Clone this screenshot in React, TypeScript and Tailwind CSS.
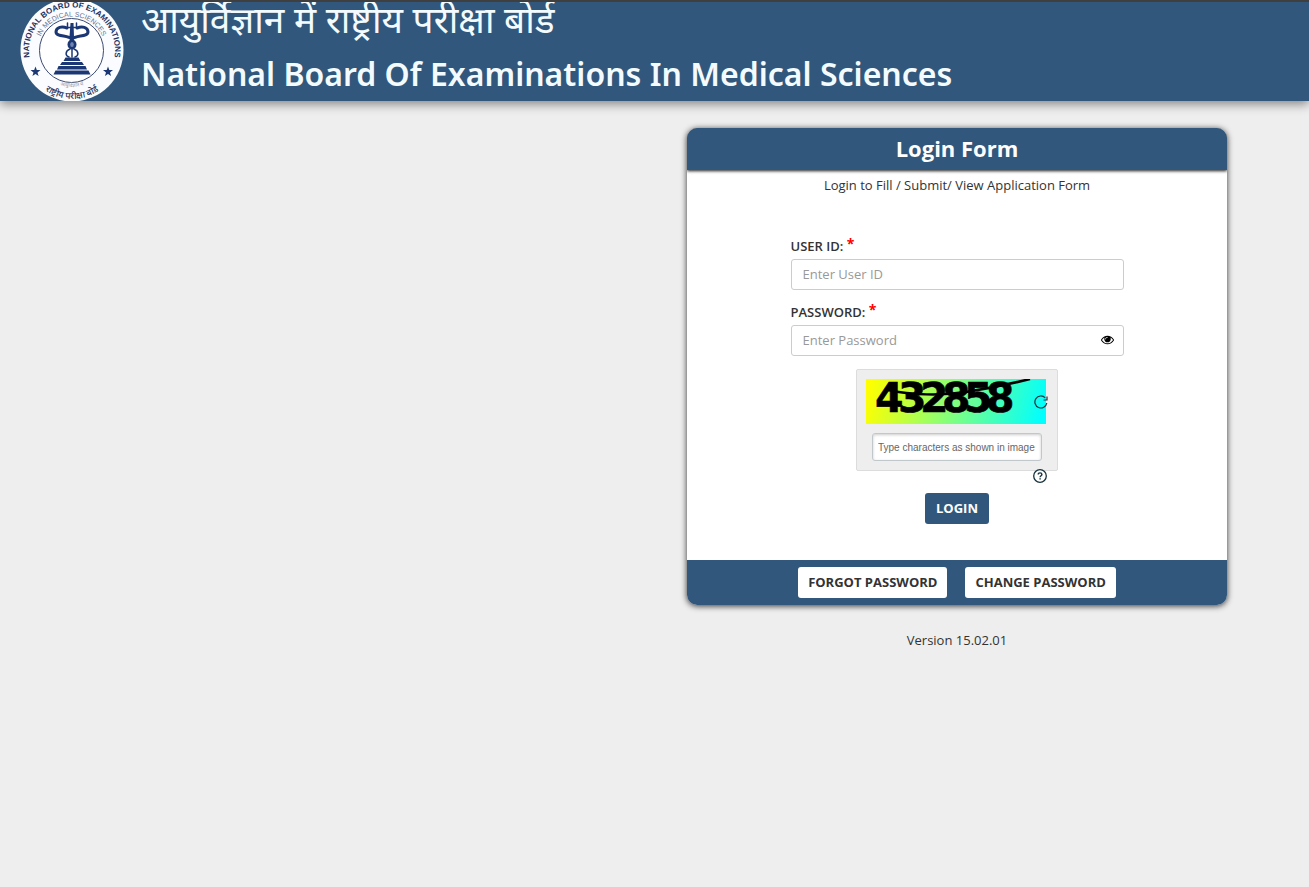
import { useState } from "react";

const captcha = [
  { digit: "4", x: 9 },
  { digit: "3", x: 32 },
  { digit: "2", x: 54 },
  { digit: "8", x: 76 },
  { digit: "5", x: 98 },
  { digit: "8", x: 120 },
];

function Seal() {
  return (
    <svg viewBox="0 0 104 104" className="h-[104px] w-[104px] shrink-0" role="img" aria-label="NBEMS seal">
      <defs>
        <path id="outer" d="M 9.500 59 A 43 43 0 1 1 94.500 59" />
        <path id="inner" d="M 17.500 52.500 A 34 34 0 0 1 85.500 52.500" />
        <path id="lower" d="M 15 83 A 47 47 0 0 0 89 83" />
        <path id="lower2" d="M 30 82 A 38 38 0 0 0 74 82" />
      </defs>
      <circle cx="52" cy="52" r="51.5" fill="#fbfcff" />
      <circle cx="51.5" cy="52.5" r="32" fill="#fff" stroke="#3b4a72" strokeWidth="1" />
      <g fill="#22335f" fontFamily="'Liberation Sans', sans-serif" textAnchor="middle">
        <text fontSize="8" fontWeight="700"><textPath href="#outer" startOffset="50%">NATIONAL BOARD OF EXAMINATIONS</textPath></text>
        <text fontSize="7" fill="#69748f"><textPath href="#inner" startOffset="50%">IN MEDICAL SCIENCES</textPath></text>
        <text fontSize="9" fontFamily="'Noto Sans', sans-serif" fontWeight="500"><textPath href="#lower" startOffset="50%">राष्ट्रीय परीक्षा बोर्ड</textPath></text>
        <text fontSize="5" fontFamily="'Noto Sans', sans-serif" fill="#8a93aa"><textPath href="#lower2" startOffset="50%">आयुर्विज्ञान में</textPath></text>
      </g>
      <g fill="#1b3875">
        <path d="M15.500 68.500l1.300 3.500 3.700.1-3 2.300 1.100 3.600-3.100-2.100-3.100 2.100 1.100-3.600-3-2.300 3.700-.1z" />
        <path d="M88 68.500l1.300 3.500 3.700.1-3 2.300 1.100 3.600-3.100-2.100-3.100 2.100 1.100-3.600-3-2.300 3.700-.1z" />
        <path d="M50.500 25h3l.5 14-1.500 12h-2L49.500 39z" />
        <ellipse cx="52" cy="46.500" rx="4.500" ry="5" />
        <path d="M45.500 59.500h13l2 3.500h-17zM42 64h20l2 3H40zM38.500 68h27l1.500 3.500H37zM35.500 72.500h33l2 4H33.500z" />
      </g>
      <ellipse cx="52" cy="46.500" rx="1.800" ry="2.500" fill="#6f86b5" />
      <g fill="none" stroke="#1b3875" strokeLinecap="round">
        <path d="M47 30c-5-2-11-1-11 4 0 5 12 3 16 7 4-4 16-2 16-7 0-5-6-6-11-4" strokeWidth="3" />
        <path d="M47.500 25v4.500h9V25" strokeWidth="1.500" />
        <path d="M50 51c-5 2-5 7-1 8M54 51c5 2 5 7 1 8" strokeWidth="1.500" />
        <path d="M52 50v9" strokeWidth="1.500" />
      </g>
    </svg>
  );
}

function EyeIcon() {
  return (
    <svg viewBox="0 128 1792 1792" className="h-[13px] w-[13px]" fill="currentColor">
      <path d="M1664 960q-152-236-381-353 61 104 61 225 0 185-131.500 316.500t-316.500 131.500-316.500-131.500-131.500-316.500q0-121 61-225-229 117-381 353 133 205 333.500 326.500t434.500 121.500 434.500-121.500 333.500-326.500zm-720-384q0-20-14-34t-34-14q-125 0-214.500 89.500t-89.500 214.500q0 20 14 34t34 14 34-14 14-34q0-86 61-147t147-61q20 0 34-14t14-34zm848 384q0 34-20 69-140 230-376.500 368.500t-499.500 138.500-499.500-139-376.500-368q-20-35-20-69t20-69q140-229 376.500-368t499.500-139 499.500 139 376.500 368q20 35 20 69z" />
    </svg>
  );
}

function ReloadIcon() {
  return (
    <svg viewBox="0 0 14 14" className="h-[14px] w-[14px]" fill="none" stroke="#17323e" strokeWidth="1.200">
      <path d="M12.800 8A6 6 0 1 1 11.200 2.800" />
      <path d="M13 1.500V5H9.500" />
    </svg>
  );
}

function HelpIcon() {
  return (
    <svg viewBox="0 0 14 14" className="h-[14px] w-[14px]" fill="none" stroke="#17323e">
      <circle cx="7" cy="7" r="6.300" fill="#fff" strokeWidth="1.300" />
      <path d="M5.200 5.600c0-2.300 3.700-2.200 3.700-.1 0 1.300-1.800 1.300-1.800 2.800" strokeWidth="1.400" />
      <path d="M7.100 9.200v1.400" strokeWidth="1.500" />
    </svg>
  );
}

function Required() {
  return <span className="align-[2px] text-[14px] font-bold leading-none text-[#ff0000]">*</span>;
}

export default function App() {
  const [visible, setVisible] = useState(false);
  return (
    <div className="min-h-screen bg-[#eeeeee] font-['Open_Sans',sans-serif] text-[13px] leading-5 text-[#333333]">
      <header className="flex h-[101px] gap-[17px] overflow-hidden border-t-2 border-[#3f3f3f] bg-[#31587c] pl-5 shadow-[0_3px_10px_rgba(0,0,0,0.45)]">
        <div className="-mt-1">
          <Seal />
        </div>
        <div className="-mt-2 flex flex-col whitespace-nowrap text-[#f3fbff]">
          <p lang="hi" className="font-['Noto_Sans',sans-serif] text-[37px] leading-[50px]">
            आयुर्विज्ञान में राष्ट्रीय परीक्षा बोर्ड
          </p>
          <h1 className="font-['Noto_Sans','Open_Sans',sans-serif] text-[32px] font-semibold leading-[60px]">
            National Board Of Examinations In Medical Sciences
          </h1>
        </div>
      </header>

      <main className="flex justify-end px-4 pt-[27px] md:pr-[82px]">
        <div className="w-full max-w-[540px]">
          <section className="overflow-hidden rounded-[10px] bg-white shadow-[0_1px_6px_rgba(0,0,0,0.8)]">
            <h2 className="relative bg-[#31587c] pb-[2px] text-center text-[22px] font-bold leading-10 text-white shadow-[0_1px_3px_rgba(0,0,0,0.9)]">
              Login Form
            </h2>
            <p className="pt-[5px] text-center">Login to Fill / Submit/ View Application Form</p>

            <form className="mx-auto flex max-w-[333px] flex-col pb-9 pt-[41px]" onSubmit={(e) => e.preventDefault()}>
              <label htmlFor="user" className="pb-[3px] font-semibold">
                USER ID: <Required />
              </label>
              <input
                id="user"
                type="text"
                placeholder="Enter User ID"
                className="h-[31px] rounded-[3px] border border-[#cccccc] bg-white px-[11px] pb-[2px] placeholder:text-[#999999]"
              />
              <label htmlFor="password" className="pb-[3px] pt-3 font-semibold">
                PASSWORD: <Required />
              </label>
              <div className="flex h-[31px] items-center rounded-[3px] border border-[#cccccc] bg-white pr-[9px]">
                <input
                  id="password"
                  type={visible ? "text" : "password"}
                  placeholder="Enter Password"
                  className="min-w-0 flex-1 px-[11px] pb-[2px] outline-none placeholder:text-[#999999]"
                />
                <button type="button" aria-label="Show password" className="text-black" onClick={() => setVisible(!visible)}>
                  <EyeIcon />
                </button>
              </div>

              <div className="relative mt-[13px] flex h-[102px] w-[202px] flex-col items-center gap-[9px] self-center rounded-[2px] border border-[#dcdcdc] bg-[#eeeeee] pt-[9px]">
                <svg viewBox="0 0 180 45" className="ml-[9px] h-[45px] w-[180px] shrink-0 self-start" role="img" aria-label="Captcha">
                  <defs>
                    <linearGradient id="rainbow" gradientUnits="userSpaceOnUse" x1="5" y1="0" x2="175" y2="45">
                      <stop offset="0" stopColor="#ffff00" />
                      <stop offset="1" stopColor="#00ffff" />
                    </linearGradient>
                  </defs>
                  <rect width="180" height="45" fill="url(#rainbow)" />
                  <g fontFamily="'DejaVu Sans', sans-serif" fontSize="41" fontWeight="700" stroke="#000" strokeWidth="0.6">
                    {captcha.map(({ digit, x }) => (
                      <text key={x} x={x} y="33">{digit}</text>
                    ))}
                  </g>
                  <path d="M22 11C45 16 75 17 100 13S140 6 164 0" fill="none" stroke="#000" strokeWidth="2.500" />
                </svg>
                <button type="button" aria-label="Reload captcha" className="absolute right-[9px] top-[25px]">
                  <ReloadIcon />
                </button>
                <input
                  type="text"
                  aria-label="Captcha characters"
                  placeholder="Type characters as shown in image"
                  className="h-[28px] w-[170px] rounded-[3px] border border-[#c0c8cc] bg-white px-[5px] font-['Liberation_Sans',sans-serif] text-[10px] shadow-[inset_0_1px_3px_rgba(0,0,0,0.2)] placeholder:text-[#666666]"
                />
                <button type="button" aria-label="Captcha help" className="absolute right-[10px] top-[99px]">
                  <HelpIcon />
                </button>
              </div>

              <button type="submit" className="mt-[22px] h-[31px] self-center rounded-[3px] bg-[#31587c] px-[11px] pb-px font-bold text-white">
                LOGIN
              </button>
            </form>

            <footer className="flex h-[45px] items-center justify-center gap-[18px] bg-[#31587c]">
              <button type="button" className="h-[31px] rounded-[3px] bg-white px-[10px] pb-px font-bold">FORGOT PASSWORD</button>
              <button type="button" className="h-[31px] rounded-[3px] bg-white px-[10px] pb-px font-bold">CHANGE PASSWORD</button>
            </footer>
          </section>
          <p className="pt-[25px] text-center">Version 15.02.01</p>
        </div>
      </main>
    </div>
  );
}
